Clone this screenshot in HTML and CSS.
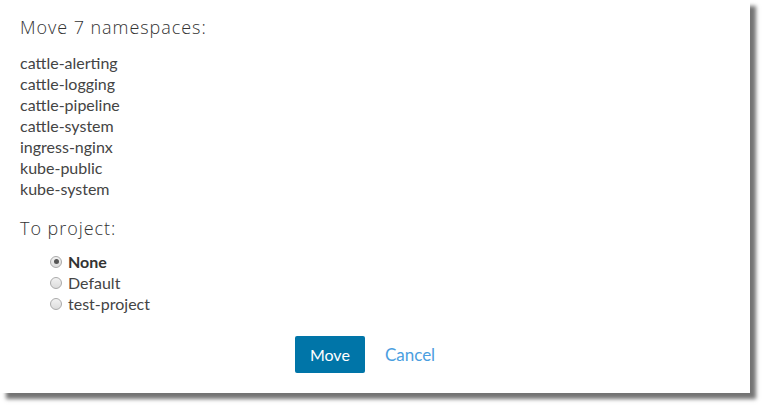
FILE: index.html
```html
<!DOCTYPE html>
<html>
<head>
<meta charset="utf-8">
<link rel="stylesheet" href="styles.css">
</head>
<body>
<div class="modal">
  <h2 class="title">Move 7 namespaces:</h2>
  <ul class="ns-list">
    <li>cattle-alerting</li>
    <li>cattle-logging</li>
    <li>cattle-pipeline</li>
    <li>cattle-system</li>
    <li>ingress-nginx</li>
    <li>kube-public</li>
    <li>kube-system</li>
  </ul>
  <h2 class="title sub">To project:</h2>
  <div class="radios">
    <label class="radio checked"><span class="dot"></span><span class="lbl">None</span></label>
    <label class="radio"><span class="dot"></span><span class="lbl">Default</span></label>
    <label class="radio"><span class="dot"></span><span class="lbl">test-project</span></label>
  </div>
  <div class="footer">
    <button class="btn primary">Move</button>
    <button class="btn link">Cancel</button>
  </div>
</div>
</body>
</html>
```
FILE: styles.css
```css
html, body {
  margin: 0;
  padding: 0;
  background: #fff;
}
body {
  height: 409px;
  overflow: hidden;
  font-family: Lato, "Open Sans", sans-serif;
  color: #444;
}
.modal {
  width: 750px;
  height: 393px;
  box-sizing: border-box;
  background: #fff;
  box-shadow: 6px 6px 4px rgba(0, 0, 0, 0.55);
  padding: 14px 20px 0 20px;
  display: flex;
  flex-direction: column;
}
.title {
  margin: 0;
  font-family: "Open Sans", sans-serif;
  font-weight: 300;
  font-size: 18px;
  line-height: 26px;
  color: #333;
  letter-spacing: 0.95px;
}
.ns-list {
  list-style: none;
  margin: 12px 0 0 0;
  padding: 0;
  font-size: 16px;
  line-height: 21px;
}
.title.sub {
  margin-top: 16px;
}
.radios {
  margin-top: 10px;
  padding-left: 30px;
  display: flex;
  flex-direction: column;
}
.radio {
  display: flex;
  align-items: center;
  height: 21px;
  font-size: 16px;
}
.dot {
  width: 10px;
  height: 10px;
  border-radius: 50%;
  border: 1px solid #aaa;
  background: linear-gradient(#f2f2f2, #dcdcdc);
  margin-right: 6px;
  position: relative;
  flex: none;
}
.radio.checked .dot::after {
  content: "";
  position: absolute;
  left: 2.5px;
  top: 2.5px;
  width: 5px;
  height: 5px;
  border-radius: 50%;
  background: #555;
}
.radio.checked .lbl {
  font-weight: 700;
  color: #333;
}
.footer {
  margin-top: 22px;
  display: flex;
  justify-content: center;
  align-items: center;
}
.btn {
  font-family: Lato, sans-serif;
  font-size: 16px;
  border: none;
  cursor: pointer;
}
.btn.primary {
  width: 70px;
  height: 37px;
  background: #0075a8;
  color: #fff;
  border-radius: 2px;
}
.btn.link {
  background: transparent;
  color: #4a9ee0;
  padding: 0 20px;
  height: 37px;
  font-size: 17px;
}
```
